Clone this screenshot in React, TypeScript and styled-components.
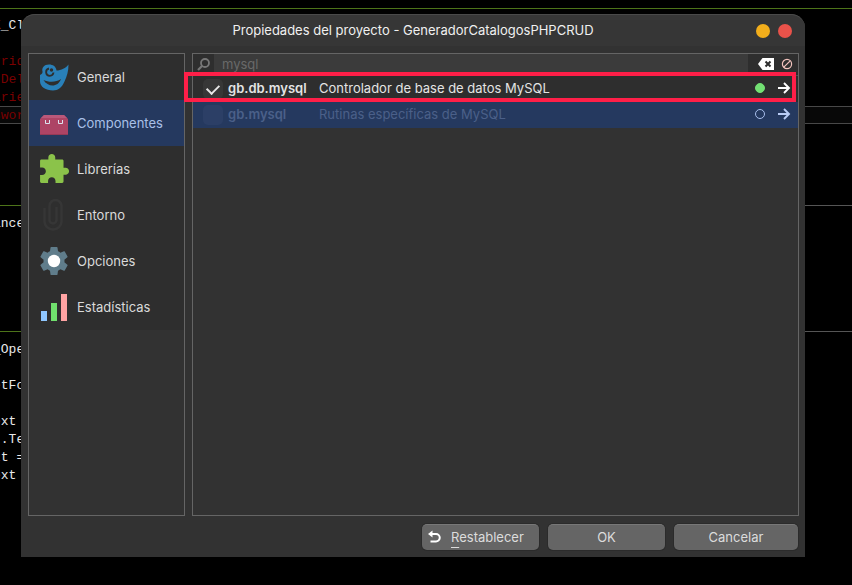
import React from "react";
import styled, { createGlobalStyle, css } from "styled-components";

const GlobalStyle = createGlobalStyle`
  * { box-sizing: border-box; }
  body { margin: 0; background: #000; }
  button, input { font: inherit; color: inherit; }
`;

const uiFont = `Inter, "Noto Sans", sans-serif`;

const Screen = styled.div`
  display: grid;
  grid-template: minmax(100vh, auto) / minmax(0, 1fr);
  background: #000;
  font-family: ${uiFont};
  font-size: 13px;
  line-height: 18px;
`;

const Editor = styled.div`
  grid-area: 1 / 1;
  overflow: hidden;
  font-family: "Liberation Mono", monospace;
  line-height: 20px;
  color: #e8e8e8;
`;

const CodeLine = styled.div<{ $tone?: "error" | "accent"; $current?: boolean }>`
  height: 18px;
  margin-left: -7px;
  white-space: pre;
  color: ${(p) => (p.$tone === "error" ? "#7a0000" : p.$tone === "accent" ? "#b5793c" : "inherit")};
  ${(p) =>
    p.$current &&
    css`
      line-height: 18px;
      background: #080808;
      border: solid #484848;
      border-width: 1px 0;
    `}
`;

const ProcedureBreak = styled.div<{ $first?: boolean }>`
  display: flex;
  align-items: center;
  height: ${(p) => (p.$first ? 16 : 18)}px;
  &::before {
    content: "";
    flex: 1;
    height: 1px;
    background: ${(p) => (p.$first ? "#4d7419" : "linear-gradient(90deg, #4d7419 16px, #555 60px)")};
  }
`;

const Symbol = styled.span`
  color: #8a3414;
`;

const Dialog = styled.section`
  grid-area: 1 / 1;
  position: relative;
  display: flex;
  flex-direction: column;
  margin: 14px 47px 28px 21px;
  border-radius: 14px 14px 0 0;
  background: #323232;
  color: #dadada;
`;

const TitleBar = styled.header`
  display: grid;
  grid-template-columns: 1fr auto 1fr;
  align-items: center;
  height: 32px;
  padding: 0 13px;
  border-top: 1px solid #494949;
  border-radius: 14px 14px 0 0;
  background: #363636;
`;

const Title = styled.h1`
  grid-column: 2;
  margin: 0;
  padding-bottom: 2px;
  font-size: 13px;
  font-weight: 400;
  color: #f0f0f0;
`;

const WindowControls = styled.div`
  display: flex;
  justify-content: flex-end;
  gap: 8px;
`;

const WindowButton = styled.button<{ $color: string }>`
  width: 14px;
  height: 14px;
  padding: 0;
  border: 0;
  border-radius: 50%;
  background: ${(p) => p.$color};
`;

const Body = styled.div`
  flex: 1;
  display: grid;
  grid-template-columns: 157px minmax(0, 1fr);
  gap: 7px;
  padding: 7px 6px 0 7px;
`;

const Sidebar = styled.nav`
  display: flex;
  flex-direction: column;
  border: 1px solid #656565;
`;

const NavItem = styled.button<{ $active?: boolean }>`
  display: flex;
  align-items: center;
  gap: 8px;
  height: 46px;
  padding: 0 10px;
  border: 0;
  text-align: left;
  background: ${(p) => (p.$active ? "#25395f" : "#2e2e2e")};
  color: ${(p) => (p.$active ? "#a9c0e8" : "#dadada")};
  svg {
    flex: none;
    width: 30px;
    height: 32px;
  }
`;

const ComponentPanel = styled.div`
  position: relative;
  border: 1px solid #656565;
`;

const SearchBar = styled.div`
  display: flex;
  align-items: center;
  height: 22px;
  border-bottom: 1px solid #505050;
  background: #2e2e2e;
`;

const SearchLabel = styled.label`
  display: flex;
  flex: none;
  justify-content: center;
  width: 21px;
`;

const SearchInput = styled.input`
  flex: 1;
  min-width: 0;
  height: 21px;
  padding: 0 8px 1px;
  border: 0;
  outline: 0;
  background: #3b3b3b;
  color: #696969;
`;

const SearchActions = styled.div`
  display: flex;
  align-items: center;
  justify-content: space-between;
  width: 50px;
  padding: 0 5px 2px 10px;
`;

const IconButton = styled.button`
  display: flex;
  flex: none;
  padding: 0;
  border: 0;
  background: none;
`;

const ComponentList = styled.ul`
  margin: 0;
  padding: 0;
  list-style: none;
`;

const ComponentRow = styled.li<{ $selected?: boolean }>`
  display: grid;
  grid-template-columns: 20px 86px minmax(0, 1fr) 23px 13px;
  align-items: center;
  height: 26px;
  padding: 0 7px 2px 10px;
  background: ${(p) => (p.$selected ? "#25395f" : "#2e2e2e")};
  color: ${(p) => (p.$selected ? "#4b6089" : "#e4e4e4")};
`;

const CheckBox = styled.input<{ $selected?: boolean }>`
  appearance: none;
  display: grid;
  place-items: center;
  width: 20px;
  height: 20px;
  margin: 2px 0 0;
  border-radius: 5px;
  background: ${(p) => (p.$selected ? "#2c3f66" : "#373737")};
  &:checked::before {
    content: "";
    width: 10px;
    height: 6px;
    margin-top: -2px;
    border: solid #e6e6e6;
    border-width: 0 0 2px 2px;
    transform: rotate(-45deg);
  }
`;

const ComponentName = styled.label`
  padding-left: 5px;
  font-weight: 600;
  white-space: nowrap;
`;

const Description = styled.span`
  padding-left: 10px;
  white-space: nowrap;
`;

const Status = styled.span<{ $stable?: boolean }>`
  width: 10px;
  height: 10px;
  border-radius: 50%;
  border: 1px solid ${(p) => (p.$stable ? "#73e073" : "#a9bfec")};
  background: ${(p) => (p.$stable ? "#73e073" : "transparent")};
`;

const Highlight = styled.div`
  position: absolute;
  top: 18px;
  left: -9px;
  right: 2px;
  height: 30px;
  border: 4px solid #ff1f48;
  pointer-events: none;
`;

const Footer = styled.footer`
  display: flex;
  justify-content: flex-end;
  gap: 9px;
  padding: 8px 7px 7px;
`;

const ActionButton = styled.button<{ $wide?: boolean; $withIcon?: boolean }>`
  display: flex;
  align-items: center;
  justify-content: ${(p) => (p.$withIcon ? "flex-start" : "center")};
  gap: 10px;
  width: ${(p) => (p.$wide ? 124 : 117)}px;
  height: 26px;
  padding: 0 6px 2px;
  border: 0;
  border-top: 1px solid #777;
  border-radius: 5px;
  background: #656565;
  box-shadow: 0 0 0 1px #2b2b2b;
  color: #dcdcdc;
`;

const Mnemonic = styled.span`
  text-decoration: underline;
  text-underline-offset: 5px;
`;

const MascotIcon = () => (
  <svg viewBox="0 0 30 32" aria-hidden="true">
    <path
      d="M1 14C3 13 3.700 12 3.500 10.500C2.500 7 5 3.500 10 3.500C14 3.500 17 5.500 17.500 9.500C22 9.500 27 7 29.500 3.500C29.500 10 28 15 25.500 20.500C23 26.500 19 29.500 14 29.500C7 29.500 1 26 1 20Z"
      fill="#2980b9"
    />
    <path d="M4.500 19C10 21.500 17 21.500 22 18C19 26.500 9 26.500 4.500 19Z" fill="#2e2e2e" />
    <path d="M10 7.500A3.700 3.700 0 1 0 14.500 11.500" fill="none" stroke="#2e2e2e" strokeWidth="1.800" />
    <circle cx="12.500" cy="9" r="1.700" fill="#2e2e2e" />
  </svg>
);

const PackageIcon = () => (
  <svg viewBox="0 0 30 32" aria-hidden="true">
    <path d="M5 8H25L29 12V27Q29 28 28 28H2Q1 28 1 27V12Z" fill="#ad4465" />
    <path d="M5 8H25L28 11H2Z" fill="#b9587a" />
    <path d="M1 27H29Q29 28 28 28H2Q1 28 1 27Z" fill="#963a56" />
    <path d="M6.500 13V16.500H10.500V13M19.500 13V16.500H23.500V13" fill="none" stroke="#dce3ef" />
  </svg>
);

const PuzzleIcon = () => (
  <svg viewBox="0 0 30 32" aria-hidden="true">
    <path
      transform="translate(-1.700 -.4) scale(1.380)"
      d="M20.500 11H19V6c0-.6-.4-1-1-1h-5V3.500C13 2.120 11.880 1 10.500 1S8 2.120 8 3.500V5H3c-.6 0-1 .4-1 1v4.800h1.500c1.490 0 2.700 1.210 2.700 2.700s-1.210 2.700-2.700 2.700H2V21c0 .6.4 1 1 1h4.800v-1.500c0-1.490 1.210-2.700 2.700-2.700s2.700 1.210 2.700 2.700V22H18c.6 0 1-.4 1-1v-5h1.500c1.380 0 2.500-1.120 2.500-2.500S21.880 11 20.500 11z"
      fill="#8bc34a"
    />
  </svg>
);

const ClipIcon = () => (
  <svg viewBox="0 0 30 32" aria-hidden="true">
    <path
      d="M5.500 9V22.500A8.500 8 0 0 0 22.500 22.500V7A6 6 0 0 0 10.500 7V21A3.500 3.500 0 0 0 17.500 21V8"
      fill="none"
      stroke="#363636"
      strokeWidth="2.500"
    />
  </svg>
);

const GearIcon = () => (
  <svg viewBox="0 0 30 32" aria-hidden="true">
    <path
      transform="translate(-1.800 -.8) scale(1.400)"
      d="M19.430 12.980c.04-.32.07-.64.07-.98s-.03-.66-.07-.98l2.110-1.650c.19-.15.24-.42.12-.64l-2-3.460c-.12-.22-.39-.3-.61-.22l-2.490 1c-.52-.4-1.080-.73-1.690-.98l-.38-2.650C14.460 2.180 14.250 2 14 2h-4c-.25 0-.46.18-.49.42l-.38 2.650c-.61.25-1.170.59-1.690.98l-2.490-1c-.23-.09-.49 0-.61.22l-2 3.460c-.13.22-.07.49.12.64l2.110 1.650c-.04.32-.07.65-.07.98s.03.66.07.98l-2.110 1.650c-.19.15-.24.42-.12.64l2 3.460c.12.22.39.3.61.22l2.490-1c.52.4 1.080.73 1.690.98l.38 2.650c.03.24.24.42.49.42h4c.25 0 .46-.18.49-.42l.38-2.650c.61-.25 1.170-.59 1.690-.98l2.490 1c.23.09.49 0 .61-.22l2-3.460c.12-.22.07-.49-.12-.64z"
      fill="#607d8b"
    />
    <circle cx="15" cy="16" r="6.200" fill="#fff" />
  </svg>
);

const ChartIcon = () => (
  <svg viewBox="0 0 30 32" aria-hidden="true">
    <path d="M2 20H8V30H2Z" fill="#8fc7ff" />
    <path d="M12 12H18V30H12Z" fill="#70e06d" />
    <path d="M22 3H28V30H22Z" fill="#ffa3a3" />
  </svg>
);

const SearchIcon = () => (
  <svg width="13" height="13" viewBox="0 0 13 13" aria-hidden="true">
    <circle cx="8" cy="5" r="4" fill="none" stroke="#777" strokeWidth="1.800" />
    <path d="M5 8L1 12" stroke="#777" strokeWidth="2.200" />
  </svg>
);

const ClearIcon = () => (
  <svg width="16" height="12" viewBox="0 0 16 12" aria-hidden="true">
    <path d="M0 6L4.500 0H16V12H4.500Z" fill="#fff" />
    <path d="M7.500 3.500L12.500 8.500M12.500 3.500L7.500 8.500" stroke="#2e2e2e" strokeWidth="2" />
  </svg>
);

const BlockIcon = () => (
  <svg width="12" height="12" viewBox="0 0 12 12" aria-hidden="true">
    <circle cx="6" cy="6" r="4.600" fill="none" stroke="#f3c3bd" strokeWidth="1.200" />
    <path d="M2.800 9.200L9.200 2.800" stroke="#f3c3bd" strokeWidth="1.200" />
  </svg>
);

const ArrowIcon = ({ color }: { color: string }) => (
  <svg width="13" height="12" viewBox="0 0 13 12" aria-hidden="true">
    <path d="M0 6H11M6 1L11 6L6 11" fill="none" stroke={color} strokeWidth="1.900" />
  </svg>
);

const UndoIcon = () => (
  <svg width="13" height="13" viewBox="0 0 13 13" aria-hidden="true">
    <path d="M3 4H8A3.700 3.700 0 0 1 8 11.500H2.500" fill="none" stroke="#fff" strokeWidth="2" />
    <path d="M0 4L4.500 0.500V7.500Z" fill="#fff" />
  </svg>
);

const sections = [
  { label: "General", Icon: MascotIcon },
  { label: "Componentes", Icon: PackageIcon, active: true },
  { label: "Librerías", Icon: PuzzleIcon },
  { label: "Entorno", Icon: ClipIcon },
  { label: "Opciones", Icon: GearIcon },
  { label: "Estadísticas", Icon: ChartIcon },
];

const components = [
  { name: "gb.db.mysql", description: "Controlador de base de datos MySQL", enabled: true },
  { name: "gb.mysql", description: "Rutinas específicas de MySQL", enabled: false },
];

export default function App() {
  return (
    <Screen>
      <GlobalStyle />
      <Editor>
        <ProcedureBreak $first />
        <CodeLine><Symbol>K</Symbol>_Cl</CodeLine>
        <CodeLine />
        <CodeLine $tone="error">{"rride"}</CodeLine>
        <CodeLine $tone="error">{"-Del"}</CodeLine>
        <CodeLine $tone="error">{"arie"}</CodeLine>
        <CodeLine $tone="error" $current>{"swor"}</CodeLine>
        <CodeLine />
        <CodeLine $tone="accent">)</CodeLine>
        <CodeLine />
        <CodeLine />
        <ProcedureBreak />
        <CodeLine>ance</CodeLine>
        <CodeLine />
        <CodeLine />
        <CodeLine />
        <CodeLine />
        <CodeLine />
        <ProcedureBreak />
        <CodeLine>_Ope</CodeLine>
        <CodeLine />
        <CodeLine><Symbol>e</Symbol>tFo</CodeLine>
        <CodeLine />
        <CodeLine><Symbol>e</Symbol>xt</CodeLine>
        <CodeLine><Symbol>t</Symbol>.Te</CodeLine>
        <CodeLine><Symbol>x</Symbol>t =</CodeLine>
        <CodeLine><Symbol>e</Symbol>xt</CodeLine>
      </Editor>

      <Dialog role="dialog" aria-labelledby="dialog-title">
        <TitleBar>
          <Title id="dialog-title">Propiedades del proyecto - GeneradorCatalogosPHPCRUD</Title>
          <WindowControls>
            <WindowButton $color="#f2ae1b" aria-label="Minimizar" />
            <WindowButton $color="#e9524a" aria-label="Cerrar" />
          </WindowControls>
        </TitleBar>

        <Body>
          <Sidebar>
            {sections.map(({ label, Icon, active }) => (
              <NavItem key={label} $active={active} aria-current={active ? "page" : undefined}>
                <Icon />
                {label}
              </NavItem>
            ))}
          </Sidebar>

          <ComponentPanel>
            <SearchBar>
              <SearchLabel htmlFor="filter" aria-label="Buscar"><SearchIcon /></SearchLabel>
              <SearchInput id="filter" type="text" defaultValue="mysql" />
              <SearchActions>
                <IconButton aria-label="Borrar"><ClearIcon /></IconButton>
                <IconButton aria-label="Sin filtro"><BlockIcon /></IconButton>
              </SearchActions>
            </SearchBar>
            <ComponentList>
              {components.map(({ name, description, enabled }) => (
                <ComponentRow key={name} $selected={!enabled}>
                  <CheckBox id={name} type="checkbox" defaultChecked={enabled} $selected={!enabled} />
                  <ComponentName htmlFor={name}>{name}</ComponentName>
                  <Description>{description}</Description>
                  <Status $stable={enabled} />
                  <IconButton aria-label="Detalles">
                    <ArrowIcon color={enabled ? "#fff" : "#b9ccf5"} />
                  </IconButton>
                </ComponentRow>
              ))}
            </ComponentList>
            <Highlight />
          </ComponentPanel>
        </Body>

        <Footer>
          <ActionButton $withIcon>
            <UndoIcon />
            <span><Mnemonic>R</Mnemonic>establecer</span>
          </ActionButton>
          <ActionButton>OK</ActionButton>
          <ActionButton $wide>Cancelar</ActionButton>
        </Footer>
      </Dialog>
    </Screen>
  );
}
